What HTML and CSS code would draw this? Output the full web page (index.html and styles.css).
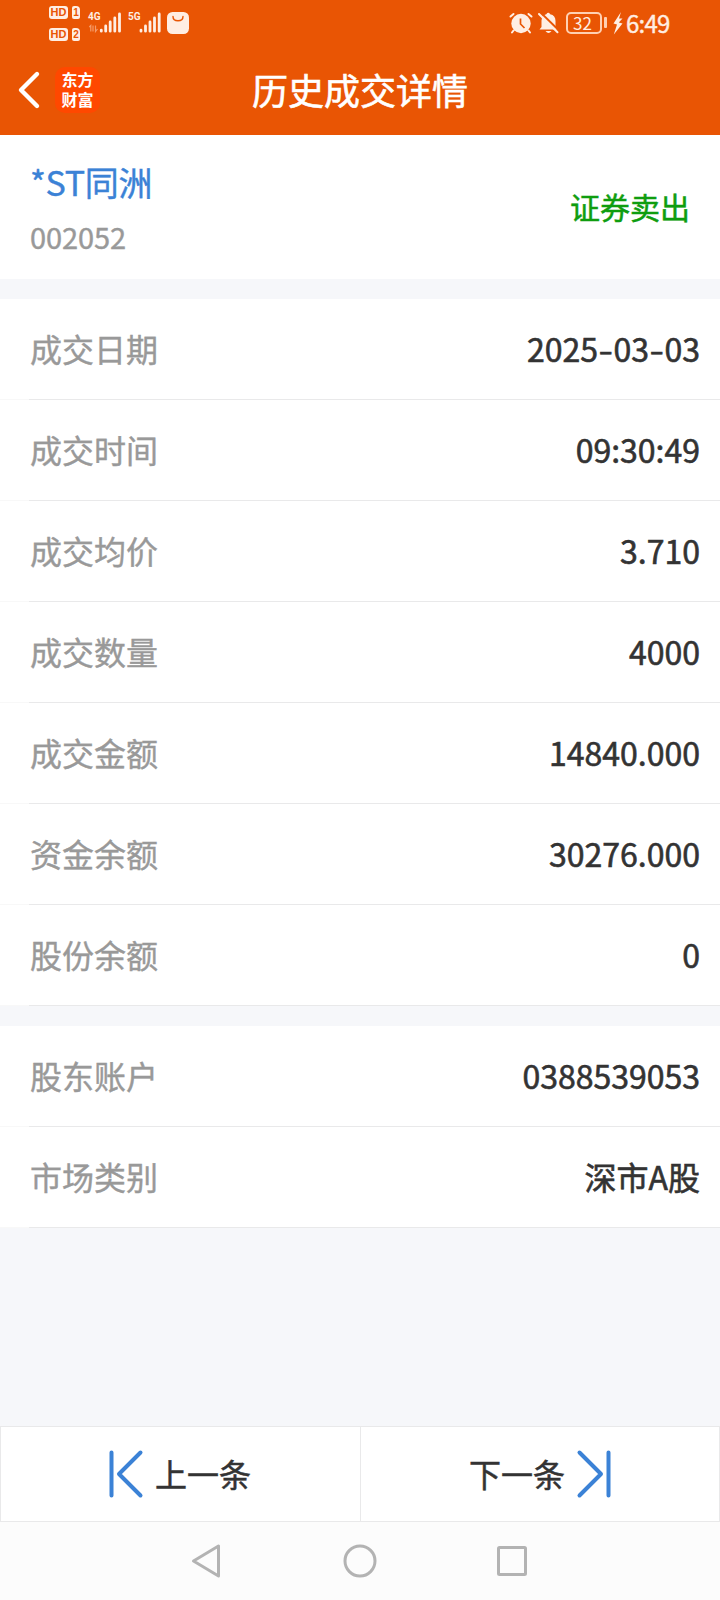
FILE: index.html
```html
<!DOCTYPE html>
<html lang="zh-CN">
<head>
<meta charset="utf-8">
<title>历史成交详情</title>
<link rel="stylesheet" href="styles.css">
</head>
<body>
<header class="header">
  <div class="status">
    <div class="status-left">
      <div class="hd-stack">
        <div class="hd"><span class="hd-label">HD</span><span class="hd-sim">1</span></div>
        <div class="hd"><span class="hd-label">HD</span><span class="hd-sim">2</span></div>
      </div>
      <div class="signal">
        <span class="net">4G</span>
        <svg width="34" height="22" viewBox="0 0 34 22"><g fill="none" stroke="#ffeee3" stroke-width="2.8" stroke-linecap="round"><path d="M13.3 19.2v1M17.7 15v5.200M22.200 11v9.200M26.800 7v13.200M31.500 3v17.200"/></g><path d="M2.800 20.500v-6l-1.500 1.500M5 14.500v6M7.500 14.500v6l2-2.500" fill="none" stroke="#f59b69" stroke-width="1.200"/></svg>
      </div>
      <div class="signal">
        <span class="net">5G</span>
        <svg width="34" height="22" viewBox="0 0 34 22"><path d="M13 19.200v1M17.500 15v5.200M22 11v9.200M26.500 7v13.200M31.200 3v17.200" fill="none" stroke="#ffeee3" stroke-width="2.800" stroke-linecap="round"/></svg>
      </div>
      <svg class="bag" width="22" height="22" viewBox="0 0 22 22"><rect width="22" height="22" rx="5.500" fill="#ffeee3"/><path d="M6 4.500q0 4.300 5 4.300t5-4.300" fill="none" stroke="#e95504" stroke-width="1.400" stroke-linecap="round"/></svg>
    </div>
    <div class="status-right">
      <svg width="24" height="22" viewBox="0 0 24 22"><g fill="none" stroke="#ffeee3" stroke-width="2" stroke-linecap="round"><path d="M1.500 4.500L4.500 2M22.500 4.500L19.500 2M4.500 18.500L3 20.500M19.500 18.500L21 20.500"/></g><circle cx="12" cy="11.500" r="9.700" fill="#ffeee3"/><path d="M11.500 6.500v5.500l4 4" fill="none" stroke="#e95504" stroke-width="1.700"/></svg>
      <svg class="bell" width="21" height="22" viewBox="0 0 21 22"><path d="M3.500 15V8.500Q4 3 8.300 2.300Q10.200-.6 12.200 2.300Q17.500 3.400 17.500 9v6l1.500 2.500H1.500z" fill="#ffeee3"/><path d="M7.500 19h6q-3 4-6 0z" fill="#ffeee3"/><path d="M1.500-.5L21.500 19" stroke="#e95504" stroke-width="2"/><path d="M1 2L19.500 20.300" stroke="#ffeee3" stroke-width="2" stroke-linecap="round"/></svg>
      <div class="battery">32</div><i class="battery-tip"></i>
      <svg class="bolt" width="10" height="23" viewBox="0 0 10 23"><path d="M8 0L.5 11.500L4 12.500L.8 22.500L9.500 11.500L5.800 10.400L9.500 6.500H6z" fill="#ffeee3"/></svg>
      <span class="clock">6:49</span>
    </div>
  </div>
  <div class="titlebar">
    <svg class="back" width="22" height="38" viewBox="0 0 22 38"><path d="M19 3L3 19L19 35" fill="none" stroke="#fff" stroke-width="4.400" stroke-linecap="round" stroke-linejoin="round"/></svg>
    <div class="logo">东方<br>财富</div>
    <h1 class="title">历史成交详情</h1>
    <div class="balance"></div>
  </div>
</header>
<main class="content">
  <section class="stock">
    <div>
      <div class="stock-name">*ST同洲</div>
      <div class="stock-code">002052</div>
    </div>
    <div class="side">证券卖出</div>
  </section>
  <section class="group">
    <div class="row"><span class="label">成交日期</span><span class="value">2025<b class="dash">-</b>03<b class="dash">-</b>03</span></div>
    <div class="row"><span class="label">成交时间</span><span class="value">09:30:49</span></div>
    <div class="row"><span class="label">成交均价</span><span class="value">3.710</span></div>
    <div class="row"><span class="label">成交数量</span><span class="value">4000</span></div>
    <div class="row"><span class="label">成交金额</span><span class="value">14840.000</span></div>
    <div class="row"><span class="label">资金余额</span><span class="value">30276.000</span></div>
    <div class="row"><span class="label">股份余额</span><span class="value">0</span></div>
  </section>
  <section class="group">
    <div class="row"><span class="label">股东账户</span><span class="value">0388539053</span></div>
    <div class="row"><span class="label">市场类别</span><span class="value">深市A股</span></div>
  </section>
</main>
<footer class="pager">
  <div class="page prev">
    <svg width="34" height="48" viewBox="0 0 34 48"><path d="M2.500 2.500v43M31.500 2.500L10 24L31.500 45.500" fill="none" stroke="#3b82d6" stroke-width="4" stroke-linecap="round" stroke-linejoin="round"/></svg>
    <span>上一条</span>
  </div>
  <div class="page next">
    <span>下一条</span>
    <svg width="34" height="48" viewBox="0 0 34 48"><path d="M31.500 2.500v43M2.500 2.500L24 24L2.500 45.500" fill="none" stroke="#3b82d6" stroke-width="4" stroke-linecap="round" stroke-linejoin="round"/></svg>
  </div>
</footer>
<nav class="sysnav">
  <svg width="34" height="36" viewBox="0 0 34 36"><path d="M27.500 3v30L2.500 18z" fill="none" stroke="#b3b3b3" stroke-width="3" stroke-linejoin="round"/></svg>
  <svg width="34" height="36" viewBox="0 0 34 36"><circle cx="17" cy="18" r="15" fill="none" stroke="#b3b3b3" stroke-width="3"/></svg>
  <svg width="34" height="36" viewBox="0 0 34 36"><rect x="3.500" y="4.500" width="27" height="27" rx="1" fill="none" stroke="#b3b3b3" stroke-width="3"/></svg>
</nav>
</body>
</html>
```
FILE: styles.css
```css
* { box-sizing: border-box; }
body {
  margin: 0;
  width: 720px;
  height: 1600px;
  display: flex;
  flex-direction: column;
  background: #f6f7fa;
  color: #333;
  font-family: "Noto Sans CJK SC", sans-serif;
}
svg { display: block; flex: none; overflow: visible; }
.header { height: 135px; background: #e95504; color: #fff; flex: none; }
.status {
  height: 45px;
  padding: 0 50px 0 49px;
  display: flex;
  justify-content: space-between;
  color: #ffeee3;
}
.status-left, .status-right { display: flex; }
.hd-stack { padding-top: 6px; display: grid; gap: 9px; align-content: start; width: 39px; }
.hd { display: flex; gap: 4px; height: 13px; font: bold 11px/13px "Liberation Sans", sans-serif; color: #e95504; }
.hd-label { width: 19px; border-radius: 3px; background: #ffeee3; text-align: center; }
.hd-sim { width: 8px; border-radius: 2px 4px 2px 2px; background: #ffeee3; text-align: center; font-size: 10px; }
.signal { width: 40px; display: grid; padding-top: 11px; align-content: start; }
.signal:nth-child(3) { width: 39px; }
.signal > * { grid-area: 1 / 1; }
.net { font: bold 10px/10px "Roboto", sans-serif; padding-top: 1px; }
.bag { margin-top: 12px; }
.status-right { padding-top: 12px; }
.bell { margin-left: 5px; }
.battery { margin-left: 7px; width: 36px; height: 22px; border: 2px solid #ffd0b2; border-radius: 5px; font-size: 17px; line-height: 17px; text-align: center; padding-right: 3px; }
.battery-tip { width: 3px; height: 11px; margin: 5px 0 0 2px; border-radius: 1px; background: #ffd0b2; }
.bolt { margin-left: 6px; }
.clock { width: 44px; margin-left: 3px; font-size: 24px; line-height: 21px; letter-spacing: -0.8px; white-space: nowrap; -webkit-text-stroke: 0.4px; }
.titlebar { height: 90px; display: flex; align-items: center; padding: 0 18px; }
.logo { width: 45px; height: 46px; margin-left: 15px; padding-top: 3px; border-radius: 10px; background: #ff4800; font-weight: bold; font-size: 16px; line-height: 19.5px; text-align: center; }
.title { flex: 1; margin: 0; text-align: center; font-size: 36px; line-height: 50px; font-weight: 400; -webkit-text-stroke: 0.6px; position: relative; top: -1px; }
.balance { width: 82px; }
.content { flex: 1; display: flex; flex-direction: column; gap: 20px; }
.stock { height: 144px; padding: 3px 30px 0; display: flex; justify-content: space-between; align-items: center; background: #fff; }
.stock-name { color: #3b82d6; font-size: 34px; line-height: 54px; letter-spacing: -0.3px; -webkit-text-stroke: 0.4px; }
.stock-code { color: #999; font-size: 29px; line-height: 54px; letter-spacing: -0.1px; -webkit-text-stroke: 0.4px; }
.side { color: #0f9d0f; font-size: 30px; padding-bottom: 5px; -webkit-text-stroke: 0.5px; }
.group { background: #fff; }
.row {
  height: 101px;
  padding: 0 20px 2px 30px;
  display: flex;
  justify-content: space-between;
  align-items: center;
  border-bottom: 1px solid;
  border-image: linear-gradient(to right, #f8f8f8 30px, #e9e9ea 30px) 1;
}
.label { color: #999; font-size: 32px; -webkit-text-stroke: 0.4px; }
.value { font-size: 32px; -webkit-text-stroke: 0.6px; }
.dash { display: inline-block; width: 15.5px; text-align: center; font-weight: inherit; transform: scaleX(1.3); }
.pager { height: 96px; flex: none; display: flex; background: #fff; border: 1px solid #e9e9ea; font-size: 32px; -webkit-text-stroke: 0.5px; }
.page { flex: 1; display: flex; align-items: center; justify-content: center; gap: 12px; }
.page span { padding-bottom: 2px; }
.prev { border-right: 1px solid #e9e9ea; padding-right: 1px; }
.sysnav { height: 78px; flex: none; display: flex; justify-content: center; gap: 118px; padding-top: 21px; background: #fcfcfc; }
```
